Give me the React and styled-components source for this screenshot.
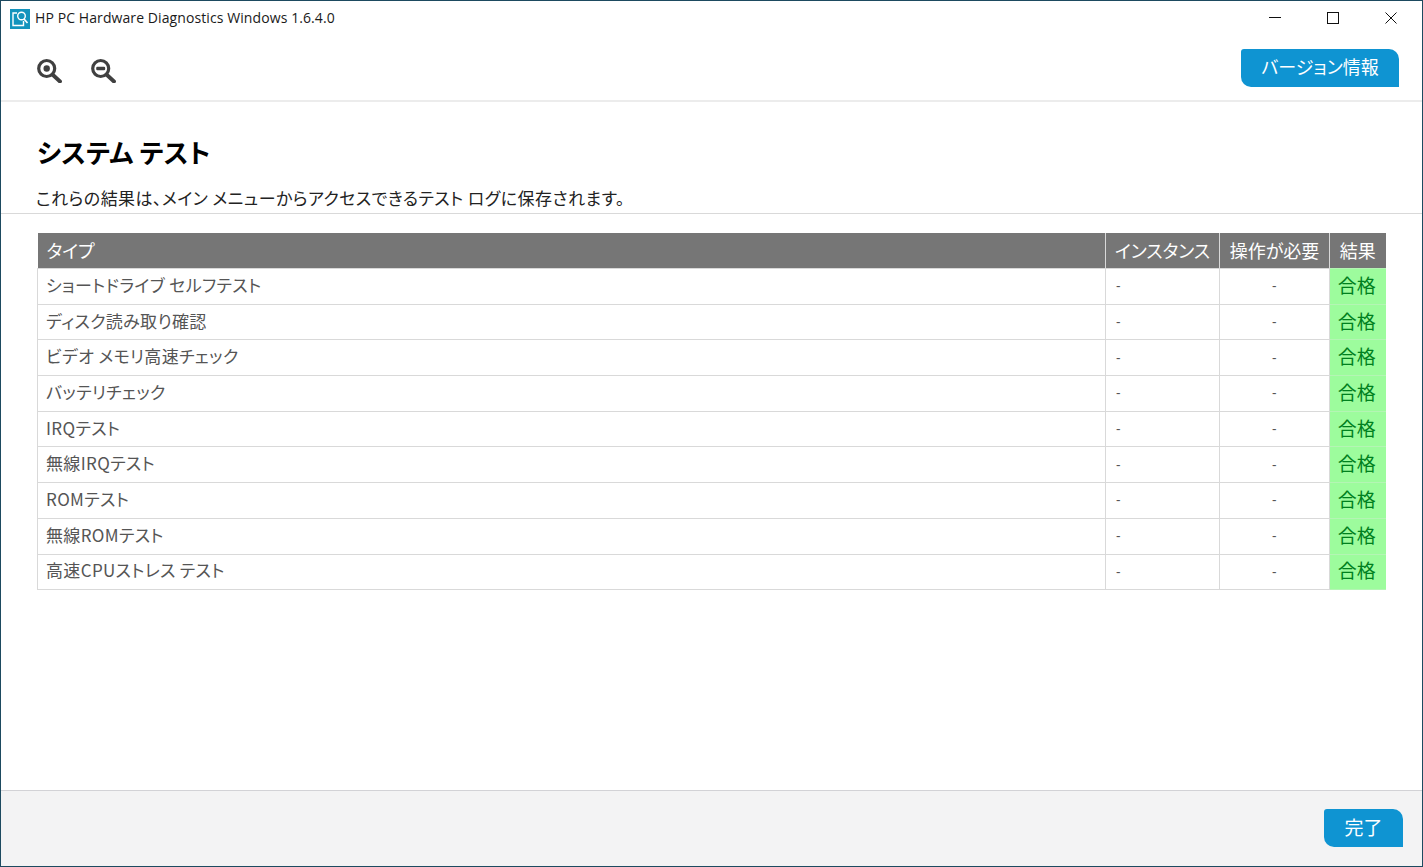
import React from 'react'
import styled, { createGlobalStyle } from 'styled-components'

const Global = createGlobalStyle`
html, body { margin: 0; padding: 0; background: #fff; }
body { font-family: "Noto Sans CJK JP", "Noto Sans", sans-serif; overflow: hidden; font-feature-settings: "palt"; }
`

const Win = styled.div`
box-sizing: border-box;
width: 1423px;
height: 867px;
display: flex;
flex-direction: column;
border: 1px solid #1d4a60;
background: #fff;
`

const TitleBar = styled.div`
box-sizing: border-box;
height: 35px;
flex: none;
display: flex;
align-items: center;
padding: 1px 2px 0 9px;
`

const AppIcon = styled.svg`
width: 20px;
height: 20px;
flex: none;
margin-right: 5px;
`

const TitleText = styled.span`
font-family: "Open Sans", "Noto Sans", sans-serif;
font-size: 14px;
line-height: 20px;
padding-bottom: 2px;
color: #1a1a1a;
letter-spacing: 0.09px;
flex: 1;
`

const WinButtons = styled.div`
display: flex;
height: 34px;
`

const WinBtn = styled.div`
box-sizing: border-box;
width: 58px;
height: 34px;
padding-bottom: 2px;
display: flex;
align-items: center;
justify-content: center;
`

const Toolbar = styled.div`
height: 64px;
flex: none;
display: flex;
align-items: flex-start;
justify-content: space-between;
border-bottom: 2px solid #ececec;
padding: 0 23px 0 35px;
`

const ZoomGroup = styled.div`
display: flex;
gap: 28px;
padding-top: 21px;
`

const Blue = styled.button`
border: none;
padding: 0 0 ${p => p.$pb || 3}px;
background: #0f94d2;
color: #fff;
font-family: "Noto Sans CJK JP", sans-serif;
font-feature-settings: "palt";
font-size: ${p => p.$fs || 18}px;
width: ${p => p.$w}px;
height: 38px;
border-radius: 3px 10px 0 10px;
`

const VersionBtn = styled(Blue)`
margin-top: 13px;
`

const Head = styled.div`
flex: none;
height: 112px;
box-sizing: border-box;
padding: 31px 0 0 36px;
border-bottom: 1px solid #d9d9d9;
`

const Title = styled.h1`
margin: 0;
font-size: 26px;
font-weight: 700;
line-height: 38px;
letter-spacing: 0.2px;
color: #000;
`

const Sub = styled.p`
margin: 15px 0 0 -1px;
font-size: 17px;
line-height: 24px;
letter-spacing: 0.45px;
color: #222;
white-space: pre;
`

const Main = styled.div`
flex: 1;
padding: 19px 36px 0;
`

const Table = styled.table`
width: 1348px;
border-collapse: collapse;
table-layout: fixed;
`

const Th = styled.th`
background: #767676;
color: #fff;
font-size: 18px;
font-weight: 400;
height: 33px;
padding: 0 0 2px ${p => p.$pl || 0}px;
text-align: ${p => p.$align || 'center'};
border-left: 1px solid #d9d9d9;
white-space: nowrap;
&:first-child { border-left: none; }
`

const Td = styled.td`
height: 31.7px;
padding: 0 0 3px ${p => p.$pl || 0}px;
font-size: 17px;
line-height: 24px;
letter-spacing: 0.35px;
color: #555;
text-align: ${p => p.$align || 'left'};
border: 1px solid #d9d9d9;
white-space: pre;
`

const Dash = styled(Td)`
height: 34.7px;
font-size: 14px;
padding-bottom: 0;
font-family: "Open Sans", sans-serif;
`

const Pass = styled.td`
background: #9dfc9d;
color: #00801e;
font-size: 19px;
line-height: 24px;
text-align: center;
padding: 0 2px 3px 0;
border-top: 1px solid #b4f5b4;
border-bottom: 1px solid #b4f5b4;
`

const Footer = styled.div`
flex: none;
height: 76px;
background: #f3f3f4;
border-top: 1px solid #d2d2d6;
display: flex;
justify-content: flex-end;
padding: 18px 19px 0 0;
box-sizing: border-box;
`

const rows = [
  'ショートドライブ セルフテスト',
  'ディスク読み取り確認',
  'ビデオ メモリ高速チェック',
  'バッテリチェック',
  'IRQテスト',
  '無線IRQテスト',
  'ROMテスト',
  '無線ROMテスト',
  '高速CPUストレス テスト',
]

const ZoomIcon = ({ plus }) => (
  <svg width="26" height="26" viewBox="0 0 26 26">
    <circle cx="10.7" cy="11.5" r="8" fill="none" stroke="#404040" strokeWidth="3.2" />
    <path d="M17 18 L24 24.5" stroke="#404040" strokeWidth="3.8" strokeLinecap="round" />
    {plus
      ? <circle cx="10.7" cy="11.5" r="3.2" fill="#404040" />
      : <rect x="6.2" y="9.7" width="9" height="3.6" rx="1.2" fill="#404040" />}
  </svg>
)

const App = () => {
  return (
    <Win>
      <Global />
      <TitleBar>
        <AppIcon viewBox="0 0 20 20">
          <rect width="20" height="20" fill="#1494bd" />
          <path d="M7 4 H3 V16.5 H13.5 V12" fill="none" stroke="#fff" strokeWidth="1.4" />
          <circle cx="11.5" cy="7" r="3.8" fill="none" stroke="#fff" strokeWidth="1.4" />
          <path d="M14 10 L17.5 14" stroke="#fff" strokeWidth="1.6" />
        </AppIcon>
        <TitleText>HP PC Hardware Diagnostics Windows 1.6.4.0</TitleText>
        <WinButtons>
          <WinBtn>
            <svg width="12" height="12" viewBox="0 0 12 12"><path d="M0 5.5 H12" stroke="#111" strokeWidth="1" /></svg>
          </WinBtn>
          <WinBtn>
            <svg width="12" height="12" viewBox="0 0 12 12"><rect x="0.5" y="0.5" width="11" height="11" fill="none" stroke="#111" strokeWidth="1" /></svg>
          </WinBtn>
          <WinBtn>
            <svg width="12" height="12" viewBox="0 0 12 12"><path d="M0.5 0.5 L11.5 11.5 M11.5 0.5 L0.5 11.5" stroke="#111" strokeWidth="1" /></svg>
          </WinBtn>
        </WinButtons>
      </TitleBar>
      <Toolbar>
        <ZoomGroup>
          <ZoomIcon plus />
          <ZoomIcon />
        </ZoomGroup>
        <VersionBtn $w={158} $pb={5}>バージョン情報</VersionBtn>
      </Toolbar>
      <Head>
        <Title>システム テスト</Title>
        <Sub>これらの結果は、メイン メニューからアクセスできるテスト ログに保存されます。</Sub>
      </Head>
      <Main>
        <Table>
          <colgroup>
            <col style={{ width: '1068px' }} />
            <col style={{ width: '114px' }} />
            <col style={{ width: '110px' }} />
            <col style={{ width: '56px' }} />
          </colgroup>
          <thead>
            <tr>
              <Th $align="left" $pl={9}>タイプ</Th>
              <Th>インスタンス</Th>
              <Th>操作が必要</Th>
              <Th>結果</Th>
            </tr>
          </thead>
          <tbody>
            {rows.map(r => (
              <tr key={r}>
                <Td $pl={8}>{r}</Td>
                <Dash $pl={10}>-</Dash>
                <Dash $align="center">-</Dash>
                <Pass>合格</Pass>
              </tr>
            ))}
          </tbody>
        </Table>
      </Main>
      <Footer>
        <Blue $w={79} $fs={19}>完了</Blue>
      </Footer>
    </Win>
  )
}

export default App
